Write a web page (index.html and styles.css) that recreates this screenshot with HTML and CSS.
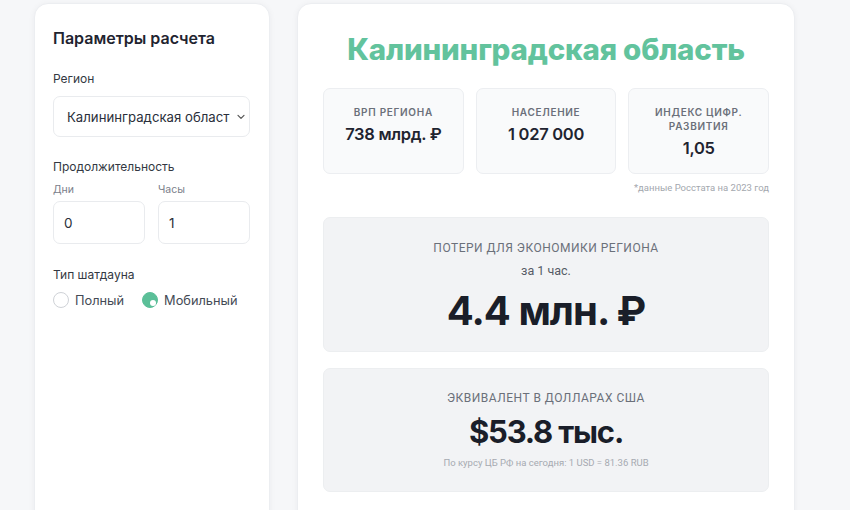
FILE: index.html
```html
<!DOCTYPE html>
<html lang="ru">
<head>
<meta charset="utf-8">
<link rel="stylesheet" href="styles.css">
</head>
<body>
<div class="page">
  <aside class="card params">
    <h2 class="params-title">Параметры расчета</h2>
    <div class="field-label region-label">Регион</div>
    <div class="select">
      <span class="select-text">Калининградская область</span>
      <svg class="chevron" width="10" height="6" viewBox="0 0 10 6"><path d="M2 1.3 L5 4.3 L8 1.3" fill="none" stroke="#555" stroke-width="1.2" stroke-linecap="round" stroke-linejoin="round"/></svg>
    </div>
    <div class="field-label dur-label">Продолжительность</div>
    <div class="dur-row">
      <div class="dur-col">
        <div class="small-label">Дни</div>
        <div class="input">0</div>
      </div>
      <div class="dur-col">
        <div class="small-label">Часы</div>
        <div class="input">1</div>
      </div>
    </div>
    <div class="field-label type-label">Тип шатдауна</div>
    <div class="radios">
      <label class="radio"><span class="dot"></span>Полный</label>
      <label class="radio checked"><span class="dot"></span>Мобильный</label>
    </div>
  </aside>
  <main class="card result">
    <h1 class="region-title">Калининградская область</h1>
    <div class="stats">
      <div class="stat">
        <div class="stat-label">ВРП региона</div>
        <div class="stat-value">738 млрд. ₽</div>
      </div>
      <div class="stat">
        <div class="stat-label">Население</div>
        <div class="stat-value">1 027 000</div>
      </div>
      <div class="stat">
        <div class="stat-label">Индекс цифр.<br>развития</div>
        <div class="stat-value">1,05</div>
      </div>
    </div>
    <div class="footnote">*данные Росстата на 2023 год</div>
    <section class="panel loss">
      <div class="panel-label">Потери для экономики региона</div>
      <div class="panel-sub">за 1 час.</div>
      <div class="panel-value big">4.4 млн. ₽</div>
    </section>
    <section class="panel usd">
      <div class="panel-label">Эквивалент в долларах США</div>
      <div class="panel-value mid">$53.8 тыс.</div>
      <div class="panel-note">По курсу ЦБ РФ на сегодня: 1 USD = 81.36 RUB</div>
    </section>
  </main>
</div>
</body>
</html>
```
FILE: styles.css
```css
* { box-sizing: border-box; }
html, body { margin: 0; padding: 0; }
body {
  background: #f6f7f9;
  font-family: Inter, "Noto Sans", "Liberation Sans", sans-serif;
  color: #1f2430;
  width: 850px;
  height: 510px;
  overflow: hidden;
}
.page {
  display: flex;
  align-items: flex-start;
  padding: 3px 0 0 34px;
  gap: 27px;
  height: 510px;
  overflow: hidden;
}
.card {
  background: #fff;
  border: 1px solid #eceef1;
  border-radius: 14px;
  box-shadow: 0 1px 6px rgba(20, 30, 50, 0.05);
}
.params {
  width: 236px;
  height: 540px;
  padding: 24px 19px 24px 18px;
  display: flex;
  flex-direction: column;
}
.params-title {
  margin: 0;
  font-size: 16px;
  line-height: 20px;
  font-weight: 600;
  color: #1f2430;
}
.field-label {
  font-size: 12px;
  line-height: 16px;
  color: #333842;
}
.region-label { margin-top: 23px; }
.select {
  margin-top: 9px;
  height: 41px;
  border: 1px solid #e9ebee;
  border-radius: 7px;
  display: flex;
  align-items: center;
  padding: 0 3px 0 13px;
  gap: 6px;
}
.select-text {
  flex: 1;
  overflow: hidden;
  white-space: nowrap;
  font-size: 13.2px;
  color: #2a2f3a;
}
.chevron { flex: none; }
.dur-label { margin-top: 22px; }
.dur-row {
  margin-top: 8px;
  display: flex;
  gap: 13px;
}
.dur-col { flex: 1; display: flex; flex-direction: column; }
.small-label {
  font-size: 10.5px;
  line-height: 14px;
  color: #7b808a;
}
.input {
  margin-top: 4px;
  height: 43px;
  border: 1px solid #e9ebee;
  border-radius: 7px;
  display: flex;
  align-items: center;
  padding-left: 10px;
  font-size: 13.5px;
  color: #2a2f3a;
}
.type-label { margin-top: 23px; }
.radios {
  margin-top: 8px;
  display: flex;
  gap: 18px;
  height: 18px;
  align-items: center;
}
.radio {
  display: flex;
  align-items: center;
  gap: 6px;
  font-size: 12.8px;
  color: #444a55;
}
.dot {
  width: 16px;
  height: 16px;
  border-radius: 50%;
  border: 1.5px solid #cfd2d7;
  background: #fff;
  position: relative;
}
.radio.checked .dot {
  border-color: #5bbf98;
  background: #5bbf98;
}
.radio.checked .dot::after {
  content: "";
  position: absolute;
  width: 6px;
  height: 6px;
  border-radius: 50%;
  background: #fff;
  right: 1px;
  bottom: 1px;
}
.result {
  width: 498px;
  padding: 28px 25px 0;
  height: 530px;
  display: flex;
  flex-direction: column;
}
.region-title {
  margin: 0;
  text-align: center;
  font-size: 29.5px;
  line-height: 34px;
  font-weight: 800;
  color: #62c39d;
  letter-spacing: -0.2px;
}
.stats {
  margin-top: 22px;
  display: flex;
  gap: 12px;
}
.stat {
  flex: 1;
  height: 86px;
  background: #f9fafb;
  border: 1px solid #eceef1;
  border-radius: 7px;
  padding-top: 16px;
  text-align: center;
}
.stat-label {
  font-size: 10px;
  line-height: 14px;
  font-weight: 600;
  text-transform: uppercase;
  letter-spacing: 0.7px;
  color: #6b707a;
}
.stat-value {
  margin-top: 4px;
  font-size: 16.5px;
  line-height: 22px;
  font-weight: 600;
  letter-spacing: -0.3px;
  color: #1f2430;
}
.footnote {
  margin-top: 8px;
  text-align: right;
  font-family: Roboto, sans-serif;
  font-size: 9.5px;
  line-height: 12px;
  color: #a3a7ae;
}
.panel {
  background: #f2f3f5;
  border: 1px solid #eceef0;
  border-radius: 7px;
  text-align: center;
}
.loss { margin-top: 23px; height: 135px; padding-top: 22px; }
.usd { margin-top: 16px; height: 124px; padding-top: 21px; }
.panel-label {
  font-family: Roboto, sans-serif;
  font-size: 12px;
  line-height: 16px;
  text-transform: uppercase;
  letter-spacing: 0.5px;
  color: #6b707a;
}
.panel-sub {
  margin-top: 7px;
  font-family: Roboto, sans-serif;
  font-size: 12.5px;
  line-height: 16px;
  color: #555b66;
}
.panel-value {
  font-weight: 700;
  color: #1a1e29;
}
.panel-value.big {
  margin-top: 8px;
  font-size: 40px;
  line-height: 48px;
  letter-spacing: -1px;
}
.panel-value.mid {
  margin-top: 6px;
  font-size: 31px;
  line-height: 40px;
  letter-spacing: -1.2px;
}
.panel-note {
  margin-top: 5px;
  font-family: Roboto, sans-serif;
  font-size: 9.5px;
  line-height: 12px;
  color: #a6aab1;
}
```
